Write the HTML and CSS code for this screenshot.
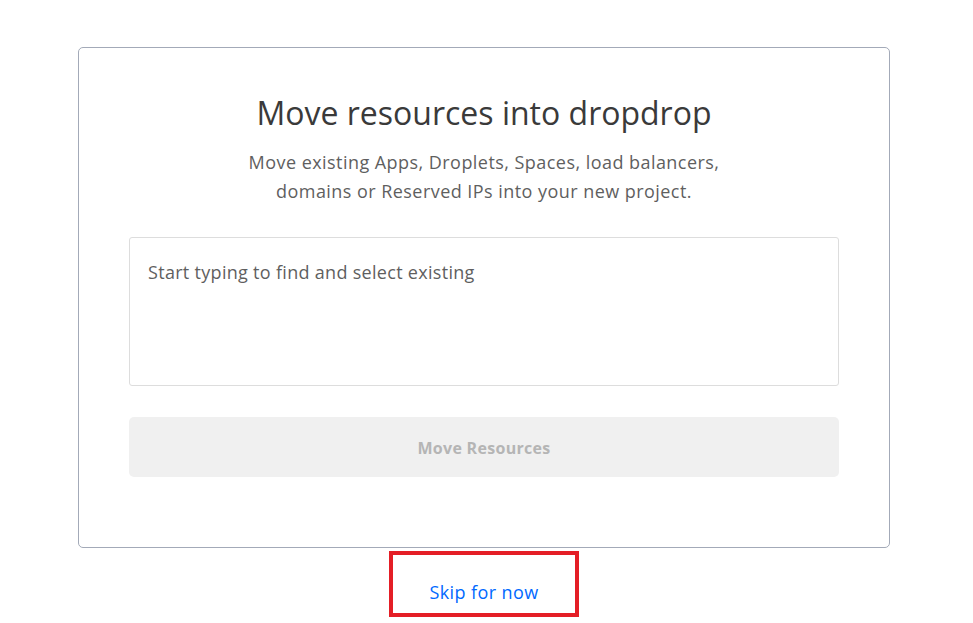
FILE: index.html
```html
<!DOCTYPE html>
<html>
<head>
<meta charset="utf-8">
<link rel="stylesheet" href="styles.css">
</head>
<body>
<div class="page">
  <div class="card">
    <h1 class="title">Move resources into dropdrop</h1>
    <p class="subtitle">Move existing Apps, Droplets, Spaces, load balancers,<br>domains or Reserved IPs into your new project.</p>
    <div class="search">Start typing to find and select existing</div>
    <button class="move-btn" disabled>Move Resources</button>
  </div>
  <div class="skip-wrap">
    <a class="skip" href="#">Skip for now</a>
  </div>
</div>
</body>
</html>
```

FILE: styles.css
```css
html, body {
  margin: 0;
  padding: 0;
  background: #ffffff;
}
body {
  font-family: "Open Sans", "Lato", sans-serif;
}
.page {
  padding: 47px 0 0 78px;
  width: 812px;
}
.card {
  border: 1px solid #a3aab8;
  border-radius: 5px;
  padding: 44px 50px 70px 50px;
  display: flex;
  flex-direction: column;
  align-items: stretch;
  height: 385px;
}
.title {
  margin: 0;
  text-align: center;
  font-weight: 400;
  font-size: 32px;
  line-height: 42px;
  color: #3a3a3a;
}
.subtitle {
  margin: 14px 0 0 0;
  text-align: center;
  font-size: 18px;
  letter-spacing: 0.45px;
  line-height: 29px;
  color: #5f5f5f;
}
.search {
  margin-top: 31px;
  height: 150px;
  border: 1px solid #dddddd;
  border-radius: 3px;
  padding: 22px 18px;
  box-sizing: border-box;
  font-size: 18px;
  letter-spacing: 0.3px;
  color: #5f5f5f;
}
.move-btn {
  margin-top: 31px;
  height: 60px;
  border: none;
  border-radius: 5px;
  background: #f0f0f0;
  font-family: inherit;
  font-weight: 700;
  font-size: 16px;
  letter-spacing: 0.3px;
  color: #b5b5b5;
  padding-top: 2px;
}
.skip-wrap {
  display: flex;
  justify-content: center;
  margin-top: 3px;
}
.skip {
  display: block;
  border: 4px solid #e41e26;
  text-align: center;
  padding-top: 25px;
  box-sizing: border-box;
  height: 66px;
  width: 190px;
  font-size: 18px;
  letter-spacing: 0.4px;
  color: #0069ff;
  text-decoration: none;
}
```
